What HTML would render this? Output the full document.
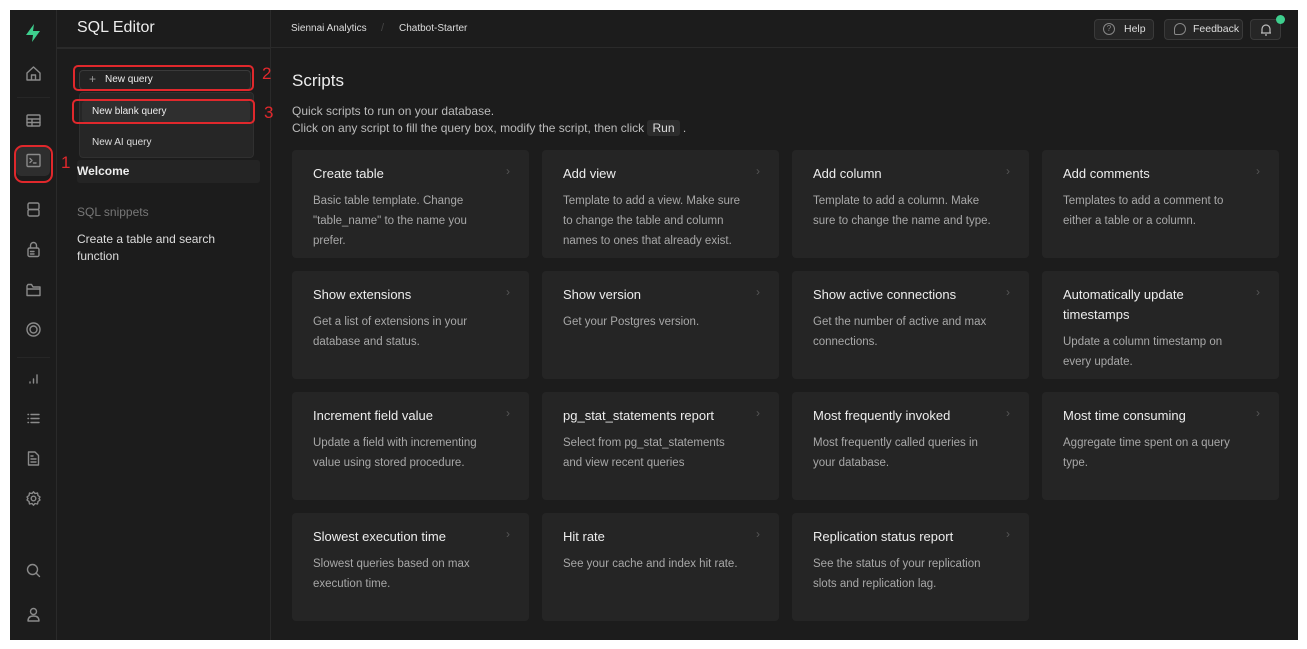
<!DOCTYPE html>
<html><head><meta charset="utf-8"><style>
*{box-sizing:border-box;margin:0;padding:0}
body{width:1307px;height:649px;background:#fff;position:relative;overflow:hidden;font-family:"Liberation Sans",sans-serif;color:#ededed}
.app{position:absolute;left:10px;top:10px;width:1288px;height:630px;background:#1c1c1c}
.ib{position:absolute;left:0;top:0;width:47px;height:630px;border-right:1px solid #2a2a2a}
.ib svg{position:absolute;left:15px;width:17px;height:17px;fill:none;stroke:#8a8a8a;stroke-width:1.4;stroke-linecap:round;stroke-linejoin:round}
.panel{position:absolute;left:47px;top:0;width:214px;height:630px;border-right:1px solid #2a2a2a}
.top{position:absolute;left:47px;top:0;right:0;height:38px;border-bottom:1px solid #2a2a2a}
.abs{position:absolute;white-space:nowrap}
.card{position:absolute;width:237px;height:108px;background:#252525;border-radius:4px}
.card h3{position:absolute;left:21px;top:14px;font-size:13px;font-weight:normal;color:#ededed;line-height:20px;width:185px;white-space:normal}
.card p{position:absolute;left:21px;font-family:"Liberation Sans",sans-serif;font-size:11.5px;color:#a8a8a8;line-height:20px;width:182px}
.card .ch{position:absolute;right:19px;top:14px;color:#555;font-size:12px}
.btn{position:absolute;top:9px;height:21px;border:1px solid #3a3a3a;border-radius:4px;background:#262626;font-size:10.5px;color:#ddd;line-height:19px}
.red{position:absolute;border:2.5px solid #e0282c;border-radius:5px}
.num{position:absolute;color:#e0282c;font-size:17px}
</style></head><body>
<div class="app">
 <div class="ib">
  <svg style="top:13px;width:20px;height:20px;left:13px" viewBox="0 0 20 20"><path d="M11 1 L3 12 H10 L9 19 L17 8 H10 Z" fill="#3ecf8e" stroke="none"/></svg>
  <svg style="top:55px" viewBox="0 0 17 17"><path d="M2 8 L8.5 2 L15 8 V15 H2 Z M6.5 15 V10 H10.5 V15"/></svg>
  <div style="position:absolute;left:7px;top:87px;width:33px;border-top:1px solid #262626"></div>
  <svg style="top:102px" viewBox="0 0 17 17"><rect x="2" y="3" width="13" height="11" rx="1"/><path d="M2 7 H15 M2 10.5 H15 M7 7 V14"/></svg>
  <div style="position:absolute;left:6px;top:137px;width:34px;height:29px;background:#2e2e2e;border-radius:5px"></div>
  <svg style="top:142px" viewBox="0 0 17 17"><rect x="2" y="2.5" width="13" height="12" rx="1"/><path d="M5 6.5 L7 8.5 L5 10.5 M8.5 11 H11"/></svg>
  <svg style="top:191px" viewBox="0 0 17 17"><rect x="3" y="2" width="11" height="6.5" rx="1.5"/><rect x="3" y="8.5" width="11" height="6.5" rx="1.5"/></svg>
  <svg style="top:231px" viewBox="0 0 17 17"><rect x="3" y="7" width="11" height="8.5" rx="1.5"/><path d="M5.5 7 V4.5 A3 3 0 0 1 11.5 4.5 V7 M5.5 10.5 H9 M5.5 13 H9"/></svg>
  <svg style="top:271px" viewBox="0 0 17 17"><path d="M2 5 V14.5 H15 V6 H8 L6.5 3.5 H3 Z M2 8 H15"/></svg>
  <svg style="top:311px" viewBox="0 0 17 17"><circle cx="8.5" cy="8.5" r="6.5"/><circle cx="8.5" cy="8.5" r="3.5"/></svg>
  <div style="position:absolute;left:7px;top:347px;width:33px;border-top:1px solid #262626"></div>
  <svg style="top:360px" viewBox="0 0 17 17"><path d="M5 13 V12 M8.5 13 V9 M12 13 V5"/></svg>
  <svg style="top:400px" viewBox="0 0 17 17"><path d="M3 4.5 H3.5 M6 4.5 H14 M3 8.5 H3.5 M6 8.5 H14 M3 12.5 H3.5 M6 12.5 H14"/></svg>
  <svg style="top:440px" viewBox="0 0 17 17"><path d="M3.5 2 H10 L13.5 5.5 V15 H3.5 Z M6 9 H11 M6 12 H11 M6 6 H8"/></svg>
  <svg style="top:480px" viewBox="0 0 17 17"><circle cx="8.5" cy="8.5" r="2.3"/><path d="M8.5 1.8 L10 3.5 L12.5 3 L13 5.5 L15 7 L14 8.5 L15 10 L13 11.5 L12.5 14 L10 13.5 L8.5 15.2 L7 13.5 L4.5 14 L4 11.5 L2 10 L3 8.5 L2 7 L4 5.5 L4.5 3 L7 3.5 Z"/></svg>
  <svg style="top:552px" viewBox="0 0 17 17"><circle cx="7.5" cy="7.5" r="5"/><path d="M11 11 L14.5 14.5"/></svg>
  <svg style="top:596px" viewBox="0 0 17 17"><circle cx="8.5" cy="5.5" r="3"/><path d="M3 15 C3 11 5.5 10 8.5 10 C11.5 10 14 11 14 15 Z"/></svg>
 </div>
 <div class="panel">
  <div class="abs" style="left:20px;top:9px;font-size:16px;color:#ededed">SQL Editor</div>
  <div style="position:absolute;left:0;top:38px;width:213px;border-top:1px solid #2a2a2a"></div>
  <div style="position:absolute;left:22px;top:60px;width:172px;height:20px;border:1px solid #3a3a3a;border-radius:4px;background:#232323"></div>
  <div class="abs" style="left:32px;top:62px;font-size:12px;color:#999">+</div>
  <div class="abs" style="left:48px;top:64px;font-size:10px;color:#ededed">New query</div>
  <div style="position:absolute;left:22px;top:82px;width:175px;height:66px;background:#262626;border:1px solid #303030;border-radius:4px"></div>
  <div style="position:absolute;left:25px;top:91px;width:168px;height:21px;background:#2f2f2f;border-radius:3px"></div>
  <div class="abs" style="left:35px;top:96px;font-size:10px;color:#ededed">New blank query</div>
  <div class="abs" style="left:35px;top:127px;font-size:10px;color:#ddd">New AI query</div>
  <div style="position:absolute;left:20px;top:150px;width:183px;height:23px;background:#242424;border-radius:3px"></div>
  <div class="abs" style="left:20px;top:154px;font-size:12px;font-weight:bold;color:#ededed">Welcome</div>
  <div class="abs" style="left:20px;top:195px;font-size:12px;color:#777">SQL snippets</div>
  <div class="abs" style="left:20px;top:221px;font-size:12px;color:#ddd;line-height:17px;white-space:normal;width:150px">Create a table and search function</div>
 </div>
 <div class="top">
  <div class="abs" style="left:234px;top:13px;font-size:10px;color:#ddd">Siennai Analytics</div>
  <div class="abs" style="left:324px;top:12px;font-size:11px;color:#444">/</div>
  <div class="abs" style="left:342px;top:13px;font-size:10px;color:#ddd">Chatbot-Starter</div>
  <div class="btn" style="left:1037px;width:60px"><span style="position:absolute;left:8px;top:3px;width:12px;height:12px;border:1px solid #888;border-radius:50%;font-size:8px;line-height:10px;text-align:center;color:#888">?</span><span style="position:absolute;left:29px">Help</span></div>
  <div class="btn" style="left:1107px;width:79px"><span style="position:absolute;left:9px;top:3px;width:12px;height:12px;border:1px solid #888;border-radius:50% 50% 50% 2px"></span><span style="position:absolute;left:28px">Feedback</span></div>
  <div class="btn" style="left:1193px;width:31px"><svg style="position:absolute;left:8px;top:3px" width="14" height="14" viewBox="0 0 14 14" fill="none" stroke="#bbb" stroke-width="1.2"><path d="M3 10 V6 A4 4 0 0 1 11 6 V10 H3 Z M2 10 H12 M6 12 H8"/></svg></div>
  <div style="position:absolute;left:1219px;top:5px;width:9px;height:9px;border-radius:50%;background:#3ecf8e"></div>
 </div>
 <div class="abs" style="left:282px;top:61px;font-size:17px;color:#ededed">Scripts</div>
 <div class="abs" style="left:282px;top:94px;font-size:12px;color:#bbb">Quick scripts to run on your database.</div>
 <div class="abs" style="left:282px;top:111px;font-size:12px;color:#bbb">Click on any script to fill the query box, modify the script, then click <span style="background:#2c2c2c;border-radius:3px;padding:1px 5px;color:#ddd">Run</span> .</div>

 <div class="card" style="left:282px;top:140px"><h3>Create table</h3><span class="ch">›</span><p style="top:41px">Basic table template. Change "table_name" to the name you prefer.</p></div>
 <div class="card" style="left:532px;top:140px"><h3>Add view</h3><span class="ch">›</span><p style="top:41px">Template to add a view. Make sure to change the table and column names to ones that already exist.</p></div>
 <div class="card" style="left:782px;top:140px"><h3>Add column</h3><span class="ch">›</span><p style="top:41px">Template to add a column. Make sure to change the name and type.</p></div>
 <div class="card" style="left:1032px;top:140px"><h3>Add comments</h3><span class="ch">›</span><p style="top:41px">Templates to add a comment to either a table or a column.</p></div>

 <div class="card" style="left:282px;top:261px"><h3>Show extensions</h3><span class="ch">›</span><p style="top:41px">Get a list of extensions in your database and status.</p></div>
 <div class="card" style="left:532px;top:261px"><h3>Show version</h3><span class="ch">›</span><p style="top:41px">Get your Postgres version.</p></div>
 <div class="card" style="left:782px;top:261px"><h3>Show active connections</h3><span class="ch">›</span><p style="top:41px">Get the number of active and max connections.</p></div>
 <div class="card" style="left:1032px;top:261px"><h3>Automatically update timestamps</h3><span class="ch">›</span><p style="top:61px">Update a column timestamp on every update.</p></div>

 <div class="card" style="left:282px;top:382px"><h3>Increment field value</h3><span class="ch">›</span><p style="top:41px">Update a field with incrementing value using stored procedure.</p></div>
 <div class="card" style="left:532px;top:382px"><h3>pg_stat_statements report</h3><span class="ch">›</span><p style="top:41px">Select from pg_stat_statements and view recent queries</p></div>
 <div class="card" style="left:782px;top:382px"><h3>Most frequently invoked</h3><span class="ch">›</span><p style="top:41px">Most frequently called queries in your database.</p></div>
 <div class="card" style="left:1032px;top:382px"><h3>Most time consuming</h3><span class="ch">›</span><p style="top:41px">Aggregate time spent on a query type.</p></div>

 <div class="card" style="left:282px;top:503px"><h3>Slowest execution time</h3><span class="ch">›</span><p style="top:41px">Slowest queries based on max execution time.</p></div>
 <div class="card" style="left:532px;top:503px"><h3>Hit rate</h3><span class="ch">›</span><p style="top:41px">See your cache and index hit rate.</p></div>
 <div class="card" style="left:782px;top:503px"><h3>Replication status report</h3><span class="ch">›</span><p style="top:41px">See the status of your replication slots and replication lag.</p></div>
</div>
<div class="red" style="left:14px;top:145px;width:39px;height:38px;border-radius:9px"></div>
<div class="num" style="left:61px;top:153px">1</div>
<div class="red" style="left:73px;top:65px;width:181px;height:26px"></div>
<div class="num" style="left:262px;top:64px">2</div>
<div class="red" style="left:72px;top:99px;width:183px;height:25px"></div>
<div class="num" style="left:264px;top:103px">3</div>
</body></html>
